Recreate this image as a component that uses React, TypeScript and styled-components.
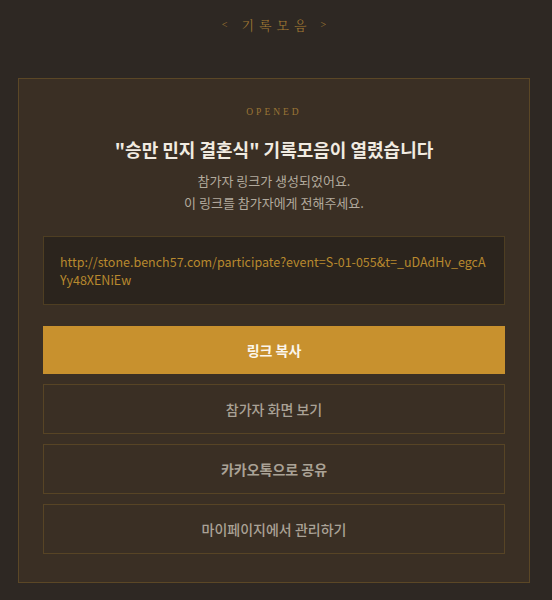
import React from "react";
import styled, { createGlobalStyle } from "styled-components";

const GlobalStyle = createGlobalStyle`
  html, body {
    margin: 0;
    padding: 0;
    background: #2e2823;
  }
  body {
    font-family: "Noto Sans CJK KR", "Noto Sans", sans-serif;
  }
`;

const Page = styled.div`
  min-height: 600px;
  padding: 13px 22px 17px 18px;
  box-sizing: border-box;
  display: flex;
  flex-direction: column;
`;

const Nav = styled.div`
  display: flex;
  justify-content: center;
  align-items: center;
  gap: 14px;
  color: #a47c34;
  font-family: "Noto Serif CJK KR", "Noto Sans CJK KR", serif;
  height: 22px;
  margin-bottom: 43px;
`;

const NavArrow = styled.span`
  font-size: 10px;
  font-family: "Liberation Serif", serif;
`;

const NavTitle = styled.span`
  font-size: 13px;
  font-weight: 300;
  letter-spacing: 5px;
  margin-right: -5px;
`;

const Card = styled.section`
  border: 1px solid #5b4726;
  background: #3a2f24;
  padding: 26px 24px 28px;
  display: flex;
  flex-direction: column;
  align-items: stretch;
`;

const Badge = styled.div`
  text-align: center;
  font-family: "Liberation Serif", serif;
  font-size: 9.5px;
  letter-spacing: 3px;
  color: #9a7536;
  line-height: 14px;
`;

const Title = styled.h1`
  margin: 18px 0 0;
  text-align: center;
  font-size: 18px;
  font-weight: 700;
  color: #f1ebe1;
  line-height: 24px;
`;

const Desc = styled.p`
  margin: 9px 0 0;
  text-align: center;
  font-size: 13px;
  line-height: 22px;
  color: #b2aa9d;
`;

const LinkBox = styled.div`
  margin-top: 22px;
  border: 1px solid #4e3e22;
  background: #2b241d;
  padding: 16px 16px 15px;
  font-size: 12.5px;
  line-height: 18px;
  color: #b8892e;
  word-break: break-all;
  min-height: 36px;
`;

const Actions = styled.div`
  margin-top: 21px;
  display: flex;
  flex-direction: column;
  gap: 10px;
`;

const Button = styled.button<{ $primary?: boolean; $strong?: boolean }>`
  height: ${(p) => (p.$primary ? 48 : 50)}px;
  font-family: "Noto Sans CJK KR", "Noto Sans", sans-serif;
  font-size: 14px;
  font-weight: ${(p) => (p.$primary || p.$strong ? 700 : 500)};
  color: ${(p) => (p.$primary ? "#fbf6ec" : "#aaa296")};
  background: ${(p) => (p.$primary ? "#c8912e" : "transparent")};
  border: 1px solid ${(p) => (p.$primary ? "#c8912e" : "#574425")};
  cursor: pointer;
  padding: 0;
`;

const url =
  "http://stone.bench57.com/participate?event=S-01-055&t=_uDAdHv_egcAYy48XENiEw";

export default function App() {
  return (
    <>
      <GlobalStyle />
      <Page>
        <Nav>
          <NavArrow>&lt;</NavArrow>
          <NavTitle>기록모음</NavTitle>
          <NavArrow>&gt;</NavArrow>
        </Nav>
        <Card>
          <Badge>OPENED</Badge>
          <Title>"승만 민지 결혼식" 기록모음이 열렸습니다</Title>
          <Desc>
            참가자 링크가 생성되었어요.
            <br />이 링크를 참가자에게 전해주세요.
          </Desc>
          <LinkBox>{url}</LinkBox>
          <Actions>
            <Button $primary>링크 복사</Button>
            <Button>참가자 화면 보기</Button>
            <Button $strong>카카오톡으로 공유</Button>
            <Button>마이페이지에서 관리하기</Button>
          </Actions>
        </Card>
      </Page>
    </>
  );
}
